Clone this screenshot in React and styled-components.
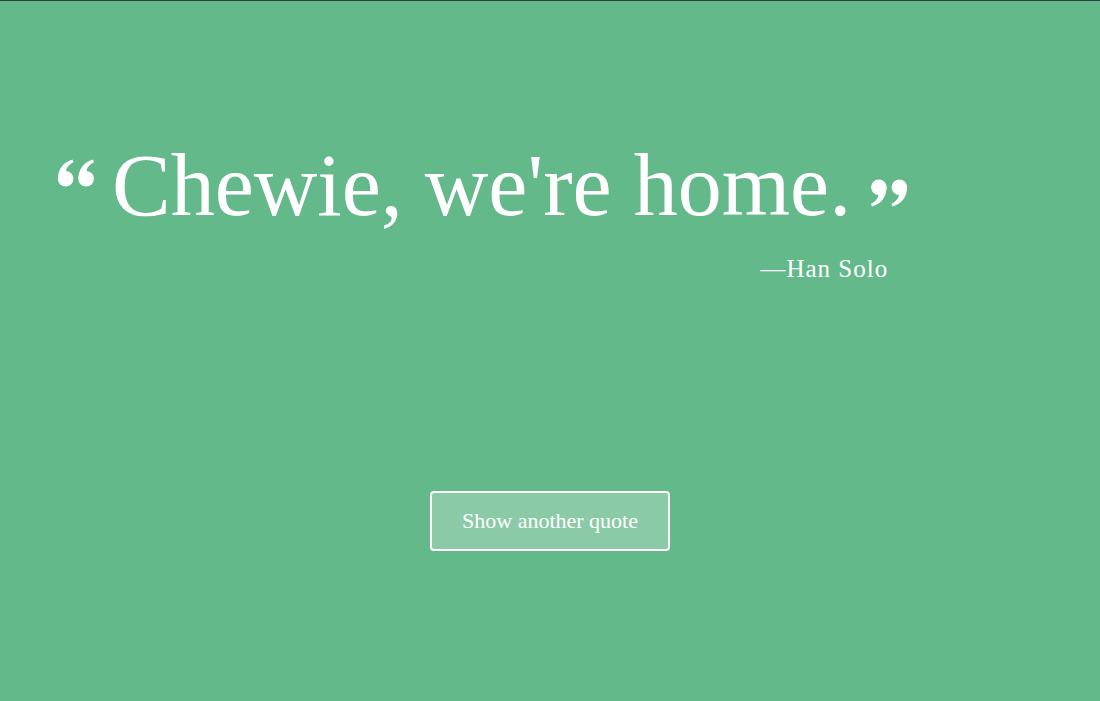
import styled, { createGlobalStyle } from 'styled-components';

const GlobalStyle = createGlobalStyle`
    html, body {
        margin: 0;
        padding: 0;
        background-color: #63b98a;
    }
    body {
        font-family: "Liberation Serif", "Times New Roman", serif;
        color: #ffffff;
    }
`;

const Page = styled.main`
    min-height: 701px;
    box-sizing: border-box;
    border-top: 1px solid #3a3a3a;
    background-color: #63b98a;
    display: flex;
    flex-direction: column;
    align-items: flex-start;
`;

const QuoteBlock = styled.section`
    display: inline-flex;
    flex-direction: column;
    margin-top: 141px;
    padding-left: 57px;
`;

const QuoteLine = styled.div`
    display: flex;
    align-items: flex-start;
`;

const QuoteText = styled.h1`
    margin: 0 19px 0 17px;
    font-size: 88px;
    font-weight: 400;
    line-height: 88px;
    white-space: nowrap;
`;

const Mark = styled.svg`
    flex: none;
    width: 38px;
    height: 28px;
    margin-top: ${(props) => props.offset}px;
    transform: ${(props) => (props.flip ? 'rotate(180deg)' : 'none')};
`;

const Author = styled.p`
    align-self: flex-end;
    margin: 26px 20px 0 0;
    font-size: 25px;
    line-height: 25px;
    letter-spacing: 1px;
`;

const ButtonRow = styled.div`
    align-self: stretch;
    display: flex;
    justify-content: center;
    margin-top: 210px;
`;

const NextButton = styled.button`
    width: 240px;
    height: 60px;
    box-sizing: border-box;
    border: 2px solid #ffffff;
    border-radius: 4px;
    background-color: #8bcaa7;
    color: #ffffff;
    font-family: "Liberation Serif", "Times New Roman", serif;
    font-size: 22px;
    cursor: pointer;
    &:hover {
        background-color: #9ad2b2;
    }
`;

function QuoteMark({ flip, offset }) {
    const glyph = (dx) => (
        <g transform={`translate(${dx} 0)`}>
            <path d="M1 19.5 C1 10 6.5 3 15.5 0.5 L16.5 3.2 C11 6 8.5 10 9 14 Z" />
            <circle cx="8.6" cy="19.8" r="7.8" />
        </g>
    );
    return (
        <Mark viewBox="0 0 38 28" fill="#ffffff" flip={flip ? 1 : 0} offset={offset}>
            {glyph(0)}
            {glyph(20.5)}
        </Mark>
    );
}

const quote = { text: "Chewie, we're home.", author: 'Han Solo' };

export default function App() {
    return (
        <>
            <GlobalStyle />
            <Page>
                <QuoteBlock>
                    <QuoteLine>
                        <QuoteMark offset={17} />
                        <QuoteText>{quote.text}</QuoteText>
                        <QuoteMark flip offset={37} />
                    </QuoteLine>
                    <Author>—{quote.author}</Author>
                </QuoteBlock>
                <ButtonRow>
                    <NextButton>Show another quote</NextButton>
                </ButtonRow>
            </Page>
        </>
    );
}
